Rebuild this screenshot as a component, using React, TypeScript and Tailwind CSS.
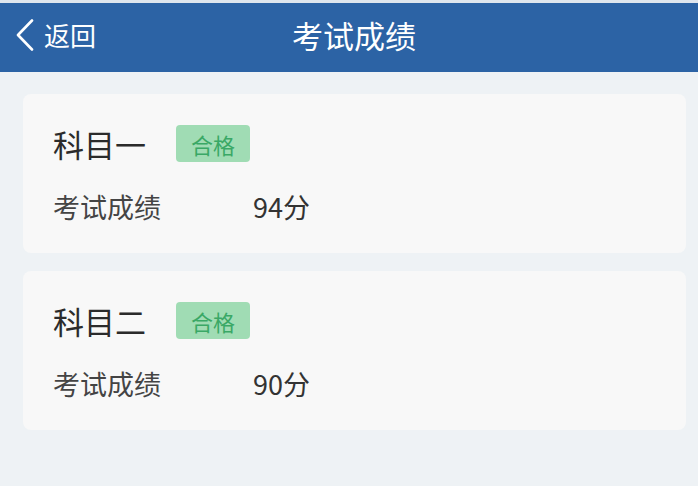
const subjects = [
  { name: '科目一', score: 94 },
  { name: '科目二', score: 90 },
];

const cjk = { fontFamily: '"Noto Sans CJK SC", "Noto Sans", sans-serif' };

export default function App() {
  return (
    <div className="w-[698px] h-[486px] bg-[#eef2f5] flex flex-col" style={cjk}>
      <header className="h-[72px] bg-[#2c63a5] border-t-[3px] border-[#dfe6ee] flex items-center relative shrink-0 pb-[6px]">
        <div className="flex items-center pl-[16px] text-white">
          <svg width="18" height="32" viewBox="0 0 18 32" fill="none">
            <polyline points="16,1.5 2,16 16,30.5" stroke="white" strokeWidth="2.6" strokeLinecap="round" strokeLinejoin="round" />
          </svg>
          <span className="text-[26px] leading-none ml-[10px]">返回</span>
        </div>
        <h1 className="absolute left-[10px] right-0 text-center text-white text-[31px] leading-none pointer-events-none">
          考试成绩
        </h1>
      </header>

      <main className="flex flex-col gap-[18px] px-[23px] pt-[22px] pr-[12px]">
        {subjects.map((s) => (
          <div key={s.name} className="bg-[#f8f8f8] rounded-[8px] pl-[30px] pt-[31px] pb-[29px]">
            <div className="flex items-center h-[37px]">
              <span className="text-[31px] leading-none text-[#2b2b2b]">{s.name}</span>
              <span className="ml-[30px] h-[37px] px-[15px] rounded-[4px] bg-[#a0dcb4] text-[#3aa866] text-[22px] leading-none flex items-center">
                合格
              </span>
            </div>
            <div className="flex items-center h-[36px] mt-[26px] text-[27px] leading-none text-[#444]">
              <span className="w-[200px]">考试成绩</span>
              <span className="text-[#333]">{s.score}分</span>
            </div>
          </div>
        ))}
      </main>
    </div>
  );
}
